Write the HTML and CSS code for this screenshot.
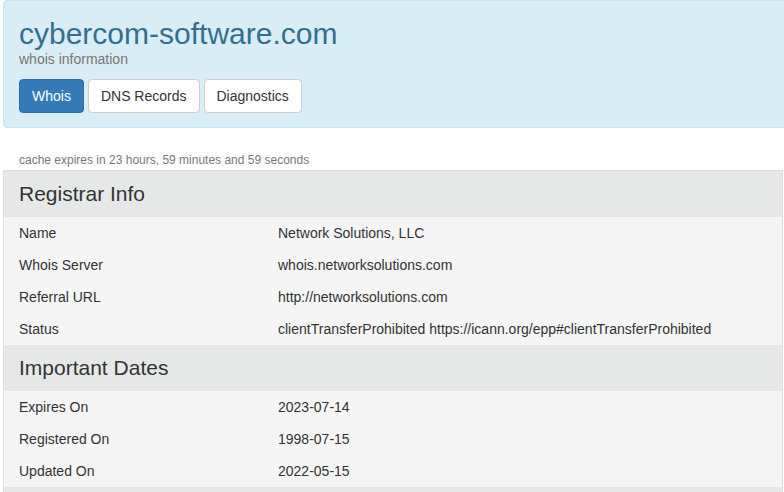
FILE: index.html
```html
<!DOCTYPE html>
<html lang="en">
<head>
  <meta charset="UTF-8" />
  <meta name="viewport" content="width=device-width, initial-scale=1" />
  <title>cybercom-software.com whois information</title>
  <link rel="stylesheet" href="styles.css">
</head>
<body>
  <div class="page">
    <!-- Domain header -->
    <div class="jumbo">
      <h1>cybercom-software.com</h1>
      <p class="sub">whois information</p>
      <nav class="tabs">
        <button class="btn btn-primary">Whois</button>
        <button class="btn">DNS Records</button>
        <button class="btn">Diagnostics</button>
      </nav>
    </div>

    <p class="cache">cache expires in 23 hours, 59 minutes and 59 seconds</p>

    <div class="info">
      <h2 class="info-head">Registrar Info</h2>
      <div class="row"><span>Name</span><span>Network Solutions, LLC</span></div>
      <div class="row"><span>Whois Server</span><span>whois.networksolutions.com</span></div>
      <div class="row"><span>Referral URL</span><span>http://networksolutions.com</span></div>
      <div class="row"><span>Status</span><span>clientTransferProhibited https://icann.org/epp#clientTransferProhibited</span></div>

      <h2 class="info-head">Important Dates</h2>
      <div class="row"><span>Expires On</span><span>2023-07-14</span></div>
      <div class="row"><span>Registered On</span><span>1998-07-15</span></div>
      <div class="row"><span>Updated On</span><span>2022-05-15</span></div>

      <!-- next section starts below the fold -->
      <div class="info-head"></div>
    </div>
  </div>
</body>
</html>
```

FILE: styles.css
```css
body {
  margin: 0;
  font-family: 'Liberation Sans', Arial, sans-serif;
  font-size: 14px;
  color: #333;
  background: #fff;
  overflow: hidden;
}

.page {
  padding-left: 3px;
  width: 780px;
}

.jumbo {
  background: #d9edf7;
  border: 1px solid #bce8f1;
  border-radius: 4px;
  margin-right: -40px;
  padding: 16px 15px 14px;
}

.jumbo h1 {
  margin: 0;
  font-size: 30px;
  font-weight: normal;
  line-height: 33px;
  color: #31708f;
}

.sub {
  margin: 1px 0 11px;
  line-height: 17px;
  color: #777;
}

.tabs {
  display: flex;
  gap: 4px;
}

.btn {
  font-family: inherit;
  font-size: 14px;
  line-height: 20px;
  padding: 6px 12px;
  border: 1px solid #ccc;
  border-radius: 4px;
  background: #fff;
  color: #333;
  cursor: pointer;
}

.btn-primary {
  background: #337ab7;
  border-color: #2e6da4;
  color: #fff;
}

.cache {
  margin: 24px 0 1px 16px;
  font-size: 12px;
  line-height: 17px;
  color: #777;
}

.info {
  border: 1px solid #ddd;
  background: #f5f5f5;
}

.info-head {
  margin: 0;
  padding: 0 15px;
  height: 46px;
  line-height: 46px;
  font-size: 21px;
  font-weight: normal;
  background: #e6e8e8;
  color: #333;
}

.row {
  display: grid;
  grid-template-columns: 259px 1fr;
  padding: 6px 15px;
  line-height: 20px;
}
```
